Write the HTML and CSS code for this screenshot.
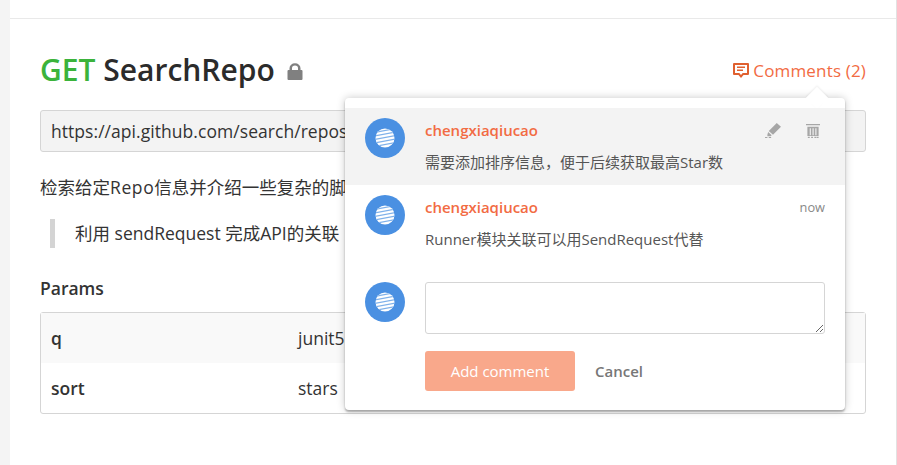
FILE: index.html
```
<!DOCTYPE html>
<html lang="zh">
<head>
<meta charset="utf-8">
<title>SearchRepo</title>
<link rel="stylesheet" href="styles.css">
</head>
<body>
<main class="panel">
  <div class="topbar"></div>
  <div class="content">
    <header class="head">
      <h1 class="title"><span class="method">GET</span> SearchRepo<svg class="lock" width="16" height="18" viewBox="0 0 16 18"><path fill="#808080" d="M2.500 7V5.300a5.500 5 0 0 1 11 0V7h1a1 1 0 0 1 1 1v8a1 1 0 0 1-1 1h-13a1 1 0 0 1-1-1V8a1 1 0 0 1 1-1zM5 7h6V5.300a3 2.800 0 0 0-6 0z"/></svg></h1>
      <div class="comments-link">
        <svg width="16" height="15" viewBox="0 0 16 15"><path fill="#e0602f" fill-rule="evenodd" d="M1 0h14a1 1 0 0 1 1 1v10a1 1 0 0 1-1 1h-4.500L8 15l-2.500-3H1a1 1 0 0 1-1-1V1a1 1 0 0 1 1-1zm1 2v8h4.300L8 12l1.700-2H14V2zM4 3.500h8V5H4zM4 6.500h6V8H4z"/></svg>
        <span>Comments (2)</span>
      </div>
    </header>
    <div class="url">https://api.github.com/search/repositories</div>
    <p class="desc">检索给定<span class="latin">Repo</span>信息并介绍一些复杂的脚本用法</p>
    <blockquote class="quote">利用 sendRequest 完成API的关联</blockquote>
    <h2 class="params-title">Params</h2>
    <div class="params">
      <div class="row row-alt"><span class="key">q</span><span class="val">junit5</span></div>
      <div class="row"><span class="key">sort</span><span class="val">stars</span></div>
    </div>
  </div>
</main>

<section class="popup">
  <span class="arrow"></span>
  <article class="comment comment-active">
    <svg class="avatar" viewBox="0 0 40 40"><use href="#globe"/></svg>
    <div class="comment-body">
      <div class="comment-top">
        <span class="author">chengxiaqiucao</span>
        <span class="tools">
          <svg width="16" height="15" viewBox="0 0 17 16"><path fill="#a6a6a6" d="M12.500 0 17 4 8.500 12.500 4 8.500zM3.300 9.500l3.800 3.500-1.100 1H2.500v-1.500zM0 15h2.500v1H0zm4 0h2.500v1H4z"/></svg>
          <svg width="14" height="15" viewBox="0 0 15 16"><path fill="#a6a6a6" d="M0 1h15v1.500H0zM1.500 4h12v10h-12zM2 14.800h2V16H2zm3.500 0h2V16h-2zm3.500 0h2V16H9zm2.500 0h2V16h-2z"/><path fill="#f3f3f3" d="M4 5.500h1.200V13H4zm3 0h1.200V13H7zm3 0h1.200V13H10z"/></svg>
        </span>
      </div>
      <p class="comment-text">需要添加排序信息，便于后续获取最高Star数</p>
    </div>
  </article>
  <article class="comment">
    <svg class="avatar" viewBox="0 0 40 40"><use href="#globe"/></svg>
    <div class="comment-body">
      <div class="comment-top">
        <span class="author">chengxiaqiucao</span>
        <span class="time">now</span>
      </div>
      <p class="comment-text">Runner模块关联可以用SendRequest代替</p>
    </div>
  </article>
  <form class="reply">
    <svg class="avatar" viewBox="0 0 40 40"><use href="#globe"/></svg>
    <div class="reply-body">
      <textarea class="reply-input"></textarea>
      <div class="reply-actions">
        <button class="btn-add" type="button">Add comment</button>
        <button class="btn-cancel" type="button">Cancel</button>
      </div>
    </div>
  </form>
</section>

<svg class="defs" width="0" height="0">
  <defs>
    <clipPath id="disc"><circle cx="20" cy="20" r="9.500"/></clipPath>
    <g id="globe">
      <circle cx="20" cy="20" r="20" fill="#4a90e2"/>
      <circle cx="20" cy="20" r="9.500" fill="#fff"/>
      <g clip-path="url(#disc)" fill="none" stroke="#7fb1ea" stroke-width="1.100">
        <path d="M9 14.500l22-4M9 18l22-4M9 21.500l22-4M9 25l22-4M9 28.500l22-4"/>
      </g>
    </g>
  </defs>
</svg>
</body>
</html>
```
FILE: styles.css
```
* { box-sizing: border-box; }
html, body { height: 100%; }
body {
  margin: 0;
  background: #f4f4f4;
  font-family: "Open Sans", "Noto Sans CJK SC", sans-serif;
  color: #333;
  overflow: hidden;
  padding-left: 10px;
}
.panel {
  background: #fff;
  height: 100%;
  border-right: 1px solid #e2e2e2;
}
.topbar {
  height: 19px;
  border-bottom: 1px solid #e9e9e9;
}
.content { padding: 29px 30px 0; }
.head {
  display: flex;
  justify-content: space-between;
  align-items: center;
  height: 44px;
}
.title {
  margin: 0;
  font-size: 30px;
  font-weight: 600;
  line-height: 44px;
  color: #2b2b2b;
  white-space: nowrap;
}
.method { color: #3bb33b; }
.lock { margin-left: 12px; }
.comments-link {
  display: flex;
  align-items: center;
  gap: 4px;
  color: #f26b43;
  font-size: 17px;
  letter-spacing: .17px;
}
.url {
  margin-top: 18px;
  height: 42px;
  padding: 0 10px;
  display: flex;
  align-items: center;
  background: #f3f3f3;
  border: 1px solid #d5d5d5;
  border-radius: 3px;
  font-size: 17.500px;
  letter-spacing: .05px;
  white-space: nowrap;
  overflow: hidden;
}
.desc {
  margin: 21px 0 0;
  font-size: 17.500px;
  line-height: 28px;
  white-space: nowrap;
}
.latin { letter-spacing: .6px; }
.quote {
  margin: 18px 0 0 10px;
  padding: 0 0 0 20px;
  border-left: 5px solid #d4d4d4;
  font-size: 17.500px;
  line-height: 29px;
}
.params-title {
  margin: 28px 0 0;
  font-size: 17.500px;
  font-weight: 600;
  line-height: 24px;
}
.params {
  margin-top: 12px;
  border: 1px solid #d5d5d5;
  border-radius: 3px;
}
.row {
  display: flex;
  align-items: center;
  height: 50px;
  padding: 0 10px;
  font-size: 17.500px;
}
.row-alt { background: #f9f9f9; }
.key { width: 247px; font-weight: 600; }
.popup {
  position: absolute;
  left: 345px;
  top: 98px;
  width: 500px;
  height: 312px;
  padding-top: 10px;
  background: #fff;
  border-radius: 4px;
  box-shadow: 0 0 8px rgba(0,0,0,.22), 0 2px 2px rgba(0,0,0,.28);
}
.arrow {
  position: absolute;
  left: 464px;
  top: -8px;
  width: 16px;
  height: 16px;
  background: #fff;
  transform: rotate(45deg);
  box-shadow: -1px -1px 2px rgba(0,0,0,.06);
}
.comment {
  position: relative;
  display: flex;
  gap: 20px;
  height: 77px;
  padding: 10px 20px 0;
}
.comment-active { background: #f3f3f3; }
.avatar { width: 40px; height: 40px; flex: none; }
.comment-body { flex: 1; min-width: 0; }
.comment-top {
  display: flex;
  justify-content: space-between;
  align-items: center;
  height: 24px;
}
.author {
  color: #f26b43;
  font-size: 15px;
  font-weight: 600;
}
.tools { display: flex; align-items: center; gap: 25px; padding-right: 5px; }
.time { color: #888; font-size: 12.800px; }
.comment-text {
  margin: 10px 0 0;
  font-size: 15px;
  line-height: 20px;
  color: #555;
}
.reply {
  display: flex;
  gap: 20px;
  padding: 20px 20px 0;
}
.reply-body { flex: 1; min-width: 0; }
.reply-input {
  display: block;
  width: 100%;
  height: 52px;
  border: 1px solid #d5d5d5;
  border-radius: 3px;
  background: #fff;
  resize: vertical;
}
.reply-actions {
  display: flex;
  align-items: center;
  gap: 20px;
  margin-top: 17px;
}
.btn-add {
  width: 150px;
  height: 40px;
  border: 0;
  border-radius: 3px;
  background: #f9a88b;
  color: #fff;
  font: 500 15px "Open Sans", sans-serif;
}
.btn-cancel {
  border: 0;
  padding: 0;
  background: none;
  color: #777;
  font: 600 15px "Open Sans", sans-serif;
}
.defs { position: absolute; }
```
